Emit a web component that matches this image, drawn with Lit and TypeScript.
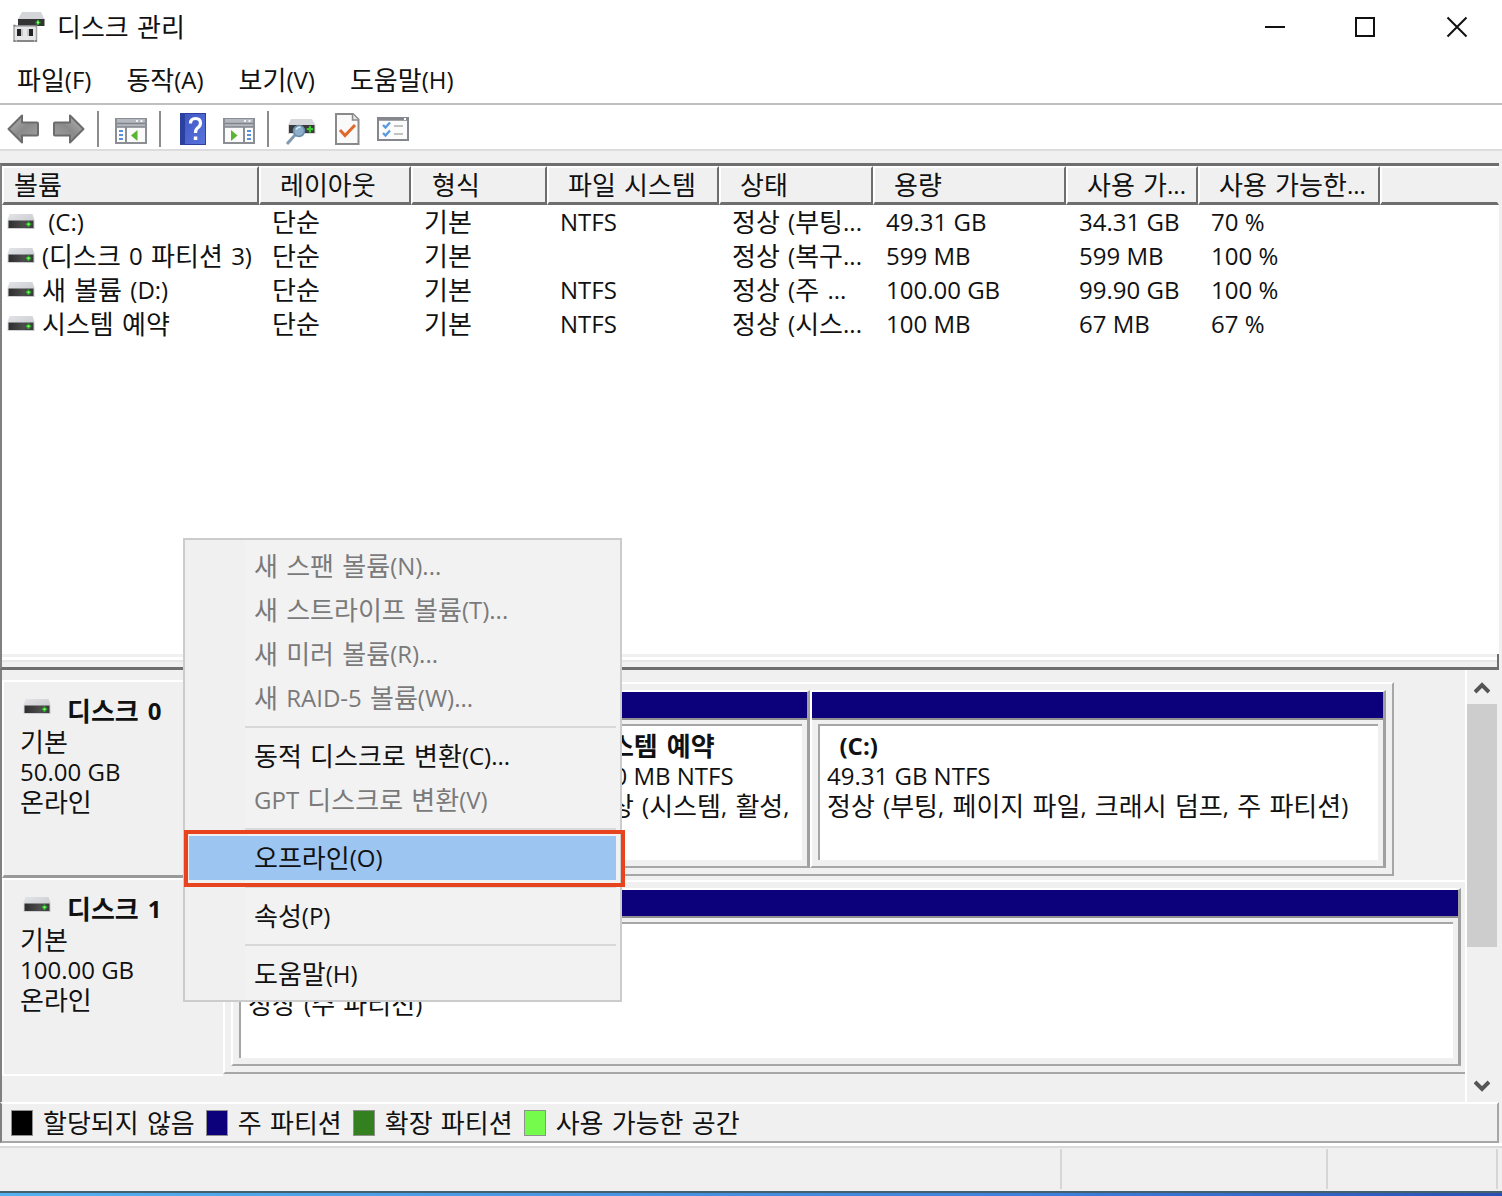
import { LitElement, html, css, svg, nothing, TemplateResult } from "lit";
import { customElement, property } from "lit/decorators.js";
import { styleMap } from "lit/directives/style-map.js";

/* Hangul and Latin runs are set at their own sizes so both scripts look even. */
const HANGUL = /(\s*[\uac00-\ud7a3]+(?:\s+[\uac00-\ud7a3]+)*\s*)/;
const mixed = (text: string): TemplateResult[] =>
  text
    .split(HANGUL)
    .filter((run) => run !== "")
    .map((run) => (HANGUL.test(run) ? html`<span class="ko">${run}</span>` : html`${run}`));

const textStyles = css`
  * {
    box-sizing: border-box;
  }
  .ko {
    font-family: "DejaVu Sans", "Noto Sans CJK KR", sans-serif;
    font-size: 26px;
    line-height: 0;
    vertical-align: -1px;
  }
  button {
    border: 0;
    padding: 0;
    margin: 0;
    background: none;
    color: inherit;
    font: inherit;
  }
  svg {
    display: block;
    flex: none;
  }
`;

interface Volume {
  name: string;
  layout: string;
  type: string;
  fs: string;
  status: string;
  capacity: string;
  free: string;
  percent: string;
}

interface Partition {
  name: string;
  size: string;
  status: string;
  weight: number;
}

interface Disk {
  name: string;
  size: string;
  partial: boolean;
  partitions: Partition[];
}

const columns = [
  { title: "볼륨", cls: "c-volume" },
  { title: "레이아웃", cls: "c-layout" },
  { title: "형식", cls: "c-type" },
  { title: "파일 시스템", cls: "c-fs" },
  { title: "상태", cls: "c-status" },
  { title: "용량", cls: "c-capacity" },
  { title: "사용 가...", cls: "c-free" },
  { title: "사용 가능한...", cls: "c-percent" },
];

const volumes: Volume[] = [
  { name: "\u00a0(C:)", layout: "단순", type: "기본", fs: "NTFS", status: "정상 (부팅...", capacity: "49.31 GB", free: "34.31 GB", percent: "70 %" },
  { name: "(디스크 0 파티션 3)", layout: "단순", type: "기본", fs: "", status: "정상 (복구...", capacity: "599 MB", free: "599 MB", percent: "100 %" },
  { name: "새 볼륨 (D:)", layout: "단순", type: "기본", fs: "NTFS", status: "정상 (주 ...", capacity: "100.00 GB", free: "99.90 GB", percent: "100 %" },
  { name: "시스템 예약", layout: "단순", type: "기본", fs: "NTFS", status: "정상 (시스...", capacity: "100 MB", free: "67 MB", percent: "67 %" },
];

const disks: Disk[] = [
  {
    name: "디스크 0",
    size: "50.00 GB",
    partial: true,
    partitions: [
      { name: "", size: "", status: "", weight: 333 },
      { name: "시스템 예약", size: "100 MB NTFS", status: "정상 (시스템, 활성,", weight: 236 },
      { name: "\u00a0\u00a0(C:)", size: "49.31 GB NTFS", status: "정상 (부팅, 페이지 파일, 크래시 덤프, 주 파티션)", weight: 571 },
    ],
  },
  {
    name: "디스크 1",
    size: "100.00 GB",
    partial: false,
    partitions: [{ name: "", size: "", status: "정상 (주 파티션)", weight: 1 }],
  },
];

const legend = [
  { label: "할당되지 않음", cls: "unallocated" },
  { label: "주 파티션", cls: "primary" },
  { label: "확장 파티션", cls: "extended" },
  { label: "사용 가능한 공간", cls: "available" },
];

const driveIcon = html`
  <svg class="drive" width="28" height="18" viewBox="0 0 28 18" aria-hidden="true">
    <defs>
      <linearGradient id="lid" x1="0" y1="0" x2="1" y2="1">
        <stop offset="0" stop-color="#e2e4e8" />
        <stop offset="1" stop-color="#c3c5ca" />
      </linearGradient>
      <linearGradient id="face" x1="0" y1="0" x2="1" y2="0">
        <stop offset="0" stop-color="#2e2e2e" />
        <stop offset="0.6" stop-color="#4c4c4c" />
        <stop offset="1" stop-color="#3a3a3a" />
      </linearGradient>
    </defs>
    <path d="M2.500 1H25.500L27.500 7V16H0.500V7Z" fill="url(#lid)" />
    <path d="M1.500 7.500H26.500V15H1.500Z" fill="url(#face)" />
    <path d="M21.500 8.500V14M18.800 11.300H24.200" stroke="#2fae2a" stroke-width="2" />
    <rect x="20.500" y="10.300" width="2" height="2" fill="#8cff70" />
  </svg>
`;

const appIcon = html`
  <svg width="32" height="32" viewBox="0 0 32 32" aria-hidden="true">
    <path d="M9 1H28L31.500 8V9H5V8Z" fill="#d3d5d9" />
    <path d="M5 8H31.500V15H5Z" fill="#333" />
    <path d="M25 9V14M22.500 11.500H27.500" stroke="#2fae2a" stroke-width="2" />
    <rect x="24" y="10.500" width="2" height="2" fill="#8cff70" />
    <rect x="1" y="15" width="22.500" height="15" fill="#e6e6e8" stroke="#a4a4a6" stroke-width="1.500" />
    <path d="M0.500 14.500H2.500M22 14.500H24M0.500 30H2.500M22 30H24M4 30H21" stroke="#77777a" stroke-width="1.500" />
    <path d="M4 18H8V25H4ZM16 18H20V25H16Z" fill="#222" />
    <path d="M8 18H10V25H8ZM14 18H16V25H14Z" fill="#c6c6c9" />
  </svg>
`;

const arrowIcon = (forward: boolean) => html`
  <svg width="32" height="32" viewBox="0 0 32 32" aria-hidden="true">
    <defs>
      <linearGradient id="steel" x1="0" y1="0" x2="1" y2="1">
        <stop offset="0" stop-color="#b8b8b8" />
        <stop offset="0.5" stop-color="#8a8a8a" />
        <stop offset="1" stop-color="#a4a4a4" />
      </linearGradient>
    </defs>
    ${svg`<path transform=${forward ? "translate(32 0) scale(-1 1)" : "translate(0 0)"}
      d="M1.500 16L15 2.500V9.500H30Q31 9.500 31 10.500V21.500Q31 22.500 30 22.500H15V29.500Z"
      fill="url(#steel)" stroke="#6c6c6c" stroke-width="2" stroke-linejoin="round" />`}
  </svg>
`;

const paneIcon = (right: boolean) => html`
  <svg width="32" height="32" viewBox="0 0 32 32" aria-hidden="true">
    <rect x="1" y="6" width="30" height="24" fill="#fbfbfb" stroke="#8b8e93" stroke-width="2" />
    <path d="M2 6H30V14H2Z" fill="#b4b9c1" />
    <path d="M2 10.500H30M2 14H30" stroke="#80858d" stroke-width="1.500" />
    <path d="M22 7V9M26.500 7V9" stroke="#f2f2f2" stroke-width="2" />
    ${right
      ? svg`<path d="M21 14V29" stroke="#8b8e93" stroke-width="2" />
          <path d="M24 18H28M24 22H28M24 26H28" stroke="#5b8fd6" stroke-width="2" />
          <path d="M8 17V28L14.500 22.500Z" fill="#5cb531" />`
      : svg`<path d="M11 14V29" stroke="#8b8e93" stroke-width="2" />
          <path d="M4 18H8M4 22H8M4 26H8" stroke="#5b8fd6" stroke-width="2" />
          <path d="M22.500 17V28L16 22.500Z" fill="#5cb531" />`}
  </svg>
`;

const helpIcon = html`
  <svg width="32" height="32" viewBox="0 0 32 32" aria-hidden="true">
    <defs>
      <linearGradient id="book" x1="0" y1="0" x2="1" y2="1">
        <stop offset="0" stop-color="#3f57c4" />
        <stop offset="1" stop-color="#5a74dc" />
      </linearGradient>
    </defs>
    <rect x="3" y="0" width="26" height="32" fill="#2b409f" />
    <rect x="8" y="1" width="20" height="30" fill="url(#book)" />
    <path d="M13.500 10.500Q13.500 5.500 18.500 5.500Q23.500 5.500 23.500 10Q23.500 13 20.500 15Q18.500 16.500 18.500 20" fill="none" stroke="#fff" stroke-width="3.200" />
    <rect x="16.800" y="23.500" width="3.500" height="3.500" fill="#fff" />
  </svg>
`;

const searchIcon = html`
  <svg width="32" height="32" viewBox="0 0 32 32" aria-hidden="true">
    <path d="M6 6H27L30.500 12V21H3V12Z" fill="#d6d8dc" />
    <path d="M4 12H29.500V20H4Z" fill="#3a3a3a" />
    <path d="M25 13V19.500M21.800 16.200H28.200" stroke="#3ccb2c" stroke-width="2.200" />
    <path d="M10 22L2 31" stroke="#8199ad" stroke-width="3" />
    <circle cx="14" cy="18" r="5.500" fill="#8fb0cc" stroke="#6c8da9" stroke-width="1.500" />
    <path d="M11 16.500Q12.500 14 15.500 14" fill="none" stroke="#d9e8f4" stroke-width="1.500" />
  </svg>
`;

const checkDocIcon = html`
  <svg width="32" height="32" viewBox="0 0 32 32" aria-hidden="true">
    <path d="M5 1H22L27.500 6.500V31H5Z" fill="#fafafa" stroke="#8a8a8a" stroke-width="2" />
    <path d="M21.500 1V7H27.500" fill="#e4e4e4" stroke="#8a8a8a" stroke-width="1.500" />
    <path d="M9 17L14 22.500L24 12" fill="none" stroke="#e0692a" stroke-width="3" />
  </svg>
`;

const listIcon = html`
  <svg width="32" height="32" viewBox="0 0 32 32" aria-hidden="true">
    <rect x="1" y="5" width="30" height="22" fill="#fcfcfc" stroke="#84878c" stroke-width="2" />
    <path d="M0 6H32" stroke="#84878c" stroke-width="3.500" />
    <path d="M27 6H29" stroke="#fff" stroke-width="2" />
    <path d="M6 12L8.500 14.500L13 9.500M6 20L8.500 22.500L13 17.500" fill="none" stroke="#5a9be0" stroke-width="2.400" />
    <path d="M17 13H26M17 21H26" stroke="#c2c2c2" stroke-width="2" />
  </svg>
`;

@customElement("volume-table")
export class VolumeTable extends LitElement {
  static styles = [
    textStyles,
    css`
      :host {
        display: block;
        background: #fff;
      }
      .table {
        width: 100%;
        table-layout: fixed;
        border-collapse: separate;
        border-spacing: 0;
      }
      .c-volume { width: 257px; }
      .c-layout { width: 152px; }
      .c-type { width: 136px; }
      .c-fs { width: 172px; }
      .c-status { width: 154px; }
      .c-capacity { width: 193px; }
      .c-free { width: 132px; }
      .c-percent { width: 182px; }
      .head {
        height: 39px;
        padding: 0 0 0 19px;
        background: #f0f0f0;
        border: 2px solid #fff;
        border-right-color: #6e6e6e;
        border-bottom: 3px solid #6e6e6e;
        font-weight: 400;
        text-align: left;
        white-space: nowrap;
        line-height: 30px;
      }
      .head:first-child {
        padding-left: 10px;
      }
      .head:last-child {
        border-right-color: #f0f0f0;
      }
      .cell {
        height: 34px;
        padding: 0 0 0 13px;
        line-height: 34px;
        white-space: nowrap;
      }
      .cell:first-child {
        padding-left: 5px;
      }
      .volume {
        display: flex;
        align-items: center;
        gap: 7px;
      }
    `,
  ];

  render() {
    return html`
      <table class="table">
        <colgroup>
          ${columns.map((c) => html`<col class=${c.cls} />`)}
          <col />
        </colgroup>
        <thead>
          <tr>
            ${columns.map((c) => html`<th class="head" scope="col">${mixed(c.title)}</th>`)}
            <th class="head" aria-hidden="true"></th>
          </tr>
        </thead>
        <tbody>
          ${volumes.map(
            (v) => html`<tr>
              <td class="cell"><div class="volume">${driveIcon}<span>${mixed(v.name)}</span></div></td>
              ${[v.layout, v.type, v.fs, v.status, v.capacity, v.free, v.percent].map(
                (value) => html`<td class="cell">${mixed(value)}</td>`,
              )}
            </tr>`,
          )}
        </tbody>
      </table>
    `;
  }
}

@customElement("disk-row")
export class DiskRow extends LitElement {
  @property({ attribute: false }) disk!: Disk;

  static styles = [
    textStyles,
    css`
      :host {
        display: block;
      }
      .row {
        display: grid;
        grid-template-columns: 221px 1fr;
        min-height: 198px;
      }
      .label {
        border: 2px solid #fff;
        border-right-width: 0;
        border-bottom: 3px solid #999;
        padding: 13px 16px;
        line-height: 30px;
      }
      .name {
        display: flex;
        align-items: center;
        gap: 16px;
        padding-left: 3px;
        font-weight: 700;
        line-height: 32px;
      }
      .name .drive {
        margin-bottom: 8px;
      }
      .last .label {
        border-bottom: 2px solid #fff;
      }
      .track {
        margin: 2px 0;
        padding: 6px 4px 6px 6px;
        border: 2px solid #fff;
        border-right-width: 0;
        border-bottom-color: #a6a6a6;
        display: flex;
      }
      .partial {
        margin-right: 71px;
        padding-right: 6px;
        border-right: 2px solid #a6a6a6;
      }
      .part {
        flex-basis: 0;
        min-width: 0;
        display: flex;
        flex-direction: column;
        border: 2px solid #fff;
        border-right: 3px solid #a0a0a0;
        border-bottom-color: #a6a6a6;
      }
      .bar {
        height: 28px;
        background: #0c007b;
        border-bottom: 2px solid #909090;
      }
      .body {
        flex: 1;
        margin: 4px 5px 6px 6px;
        padding: 5px 0 0 7px;
        background: #fff;
        border-top: 2px solid #a6a6a6;
        border-left: 2px solid #a6a6a6;
        line-height: 30px;
        white-space: nowrap;
        overflow: hidden;
      }
      .line {
        min-height: 30px;
      }
      .title {
        font-weight: 700;
      }
    `,
  ];

  render() {
    const d = this.disk;
    return html`
      <section class="row ${d.partial ? "" : "last"}">
        <div class="label">
          <div class="name">${driveIcon}<span>${mixed(d.name)}</span></div>
          <div>${mixed("기본")}</div>
          <div>${d.size}</div>
          <div>${mixed("온라인")}</div>
        </div>
        <div class="track ${d.partial ? "partial" : ""}">
          ${d.partitions.map(
            (p) => html`<div class="part" style=${styleMap({ flexGrow: String(p.weight) })}>
              <div class="bar"></div>
              <div class="body">
                <div class="line title">${mixed(p.name)}</div>
                <div class="line">${p.size}</div>
                <div class="line">${mixed(p.status)}</div>
              </div>
            </div>`,
          )}
        </div>
      </section>
    `;
  }
}

@customElement("disk-menu")
export class DiskMenu extends LitElement {
  static styles = [
    textStyles,
    css`
      :host {
        display: block;
      }
      .menu {
        width: 439px;
        padding: 4px;
        border: 2px solid #ccc;
        background: linear-gradient(to right, #f0f0f0 60px, #f2f2f2 60px);
      }
      .item {
        position: relative;
        display: block;
        width: 100%;
        height: 44px;
        padding-left: 65px;
        line-height: 44px;
        text-align: left;
      }
      .item:disabled {
        color: #7a7a7a;
      }
      .active {
        background: #9cc5f2;
      }
      .mark {
        position: absolute;
        inset: -6px -9px -7px -5px;
        border: 4px solid #e8431f;
      }
      .rule {
        height: 2px;
        margin: 6px 0 6px 56px;
        border: 0;
        background: #d9d9d9;
      }
    `,
  ];

  private item(label: string, disabled = false, active = false) {
    return html`<button class="item ${active ? "active" : ""}" role="menuitem" ?disabled=${disabled}>
      ${mixed(label)}${active ? html`<span class="mark"></span>` : nothing}
    </button>`;
  }

  render() {
    return html`
      <div class="menu" role="menu">
        ${this.item("새 스팬 볼륨(N)...", true)} ${this.item("새 스트라이프 볼륨(T)...", true)}
        ${this.item("새 미러 볼륨(R)...", true)} ${this.item("새 RAID-5 볼륨(W)...", true)}
        <hr class="rule" />
        ${this.item("동적 디스크로 변환(C)...")} ${this.item("GPT 디스크로 변환(V)", true)}
        <hr class="rule" />
        ${this.item("오프라인(O)", false, true)}
        <hr class="rule" />
        ${this.item("속성(P)")}
        <hr class="rule" />
        ${this.item("도움말(H)")}
      </div>
    `;
  }
}

@customElement("app-root")
export class AppRoot extends LitElement {
  static styles = [
    textStyles,
    css`
      :host {
        display: block;
      }
      .window {
        position: relative;
        display: flex;
        flex-direction: column;
        min-height: 100vh;
        background: #fff;
        color: #111;
        font: 24px/30px "Open Sans", "Noto Sans CJK KR", sans-serif;
      }
      .titlebar {
        display: flex;
        align-items: center;
        height: 54px;
        padding-left: 13px;
        gap: 12px;
      }
      .title {
        flex: 1;
        margin: 0;
        font: inherit;
      }
      .controls {
        display: flex;
      }
      .control {
        display: grid;
        place-items: center;
        width: 91px;
        height: 54px;
      }
      .menubar {
        display: flex;
        align-items: center;
        gap: 35px;
        height: 51px;
        padding: 2px 17px 0;
        border-bottom: 2px solid #c0c0c2;
      }
      .toolbar {
        display: flex;
        align-items: center;
        gap: 14px;
        height: 46px;
        padding: 4px 7px 0;
        border-bottom: 2px solid #dcdcdc;
      }
      .tool {
        width: 32px;
        height: 32px;
      }
      .divider {
        width: 2px;
        height: 36px;
        margin: 0 2px 0 -2px;
        background: #8c8c8c;
      }
      .content {
        flex: 1;
        display: flex;
        flex-direction: column;
        padding: 12px 3px 0 0;
        background: #f0f0f0;
      }
      .list {
        flex: 1;
        border-top: 3px solid #6e6e6e;
        border-left: 2px solid #808080;
      }
      .splitter {
        height: 16px;
        border-left: 2px solid #808080;
        border-right: 2px solid #6e6e6e;
        border-bottom: 3px solid #6e6e6e;
        background: linear-gradient(#f0f0f0 3px, #fff 3px 6px, #e6e6e6 6px 8px, #f0f0f0 8px);
      }
      .graph {
        display: flex;
        border-left: 2px solid #808080;
      }
      .disks {
        flex: 1;
        padding: 10px 0 26px;
        border-right: 2px solid #fff;
      }
      .scrollbar {
        display: flex;
        flex-direction: column;
        width: 32px;
        padding-right: 2px;
      }
      .step {
        display: grid;
        place-items: center;
        height: 34px;
      }
      .thumb {
        flex: 243;
        background: #cdcdcd;
      }
      .rest {
        flex: 121;
      }
      .legend {
        display: flex;
        align-items: center;
        gap: 11px;
        height: 41px;
        margin: 0;
        padding: 0 10px 0 9px;
        list-style: none;
        border: 2px solid #a6a6a6;
        border-left-color: #808080;
        border-top-color: #fff;
      }
      .key {
        display: flex;
        align-items: center;
        gap: 10px;
      }
      .swatch {
        width: 22px;
        height: 26px;
        border: 1px solid #909090;
      }
      .unallocated { background: #000; }
      .primary { background: #0c007b; }
      .extended { background: #33801f; }
      .available { background: #74fb4c; }
      .statusbar {
        display: flex;
        height: 48px;
        padding: 3px 4px 2px 0;
        background: #f0f0f0;
        border-top: 3px solid #fff;
        box-shadow: inset 0 2px #dadada;
      }
      .pane {
        width: 170px;
        border-right: 2px solid #d6d6d6;
      }
      .pane:first-child {
        flex: 1;
      }
      .pane:nth-child(2) {
        width: 266px;
      }
      .desktop {
        height: 5px;
        border-top: 2px solid #43606e;
        background: linear-gradient(to right, #55b1f0, #3f7fdc 70%, #2a4fb6);
      }
      .context {
        position: absolute;
        left: 183px;
        top: 538px;
      }
    `,
  ];

  render() {
    return html`
      <div class="window">
        <header class="titlebar">
          ${appIcon}
          <h1 class="title">${mixed("디스크 관리")}</h1>
          <div class="controls">
            <button class="control" aria-label="최소화">
              <svg width="22" height="22" viewBox="0 0 22 22"><path d="M1 11H21" stroke="#111" stroke-width="2" /></svg>
            </button>
            <button class="control" aria-label="최대화">
              <svg width="22" height="22" viewBox="0 0 22 22"><rect x="1" y="2" width="18" height="18" fill="none" stroke="#111" stroke-width="2" /></svg>
            </button>
            <button class="control" aria-label="닫기">
              <svg width="22" height="22" viewBox="0 0 22 22"><path d="M1.500 1.500L20.500 20.500M20.500 1.500L1.500 20.500" stroke="#111" stroke-width="2" /></svg>
            </button>
          </div>
        </header>
        <nav class="menubar">
          ${["파일(F)", "동작(A)", "보기(V)", "도움말(H)"].map((m) => html`<button>${mixed(m)}</button>`)}
        </nav>
        <div class="toolbar" role="toolbar">
          <button class="tool" aria-label="뒤로">${arrowIcon(false)}</button>
          <button class="tool" aria-label="앞으로">${arrowIcon(true)}</button>
          <span class="divider"></span>
          <button class="tool" aria-label="콘솔 트리">${paneIcon(false)}</button>
          <span class="divider"></span>
          <button class="tool" aria-label="도움말">${helpIcon}</button>
          <button class="tool" aria-label="작업 창">${paneIcon(true)}</button>
          <span class="divider"></span>
          <button class="tool" aria-label="디스크 검색">${searchIcon}</button>
          <button class="tool" aria-label="속성">${checkDocIcon}</button>
          <button class="tool" aria-label="설정">${listIcon}</button>
        </div>
        <main class="content">
          <volume-table class="list"></volume-table>
          <div class="splitter"></div>
          <div class="graph">
            <div class="disks">${disks.map((d) => html`<disk-row .disk=${d}></disk-row>`)}</div>
            <div class="scrollbar">
              <button class="step" aria-label="위로">
                <svg width="16" height="14" viewBox="0 0 16 14"><path d="M1 12L8 5L15 12" fill="none" stroke="#555" stroke-width="4" /></svg>
              </button>
              <div class="thumb"></div>
              <div class="rest"></div>
              <button class="step" aria-label="아래로">
                <svg width="16" height="14" viewBox="0 0 16 14"><path d="M1 4L8 11L15 4" fill="none" stroke="#555" stroke-width="4" /></svg>
              </button>
            </div>
          </div>
          <ul class="legend">
            ${legend.map((l) => html`<li class="key"><span class="swatch ${l.cls}"></span><span>${mixed(l.label)}</span></li>`)}
          </ul>
        </main>
        <footer class="statusbar">
          <div class="pane"></div>
          <div class="pane"></div>
          <div class="pane"></div>
        </footer>
        <div class="desktop"></div>
        <disk-menu class="context"></disk-menu>
      </div>
    `;
  }
}
